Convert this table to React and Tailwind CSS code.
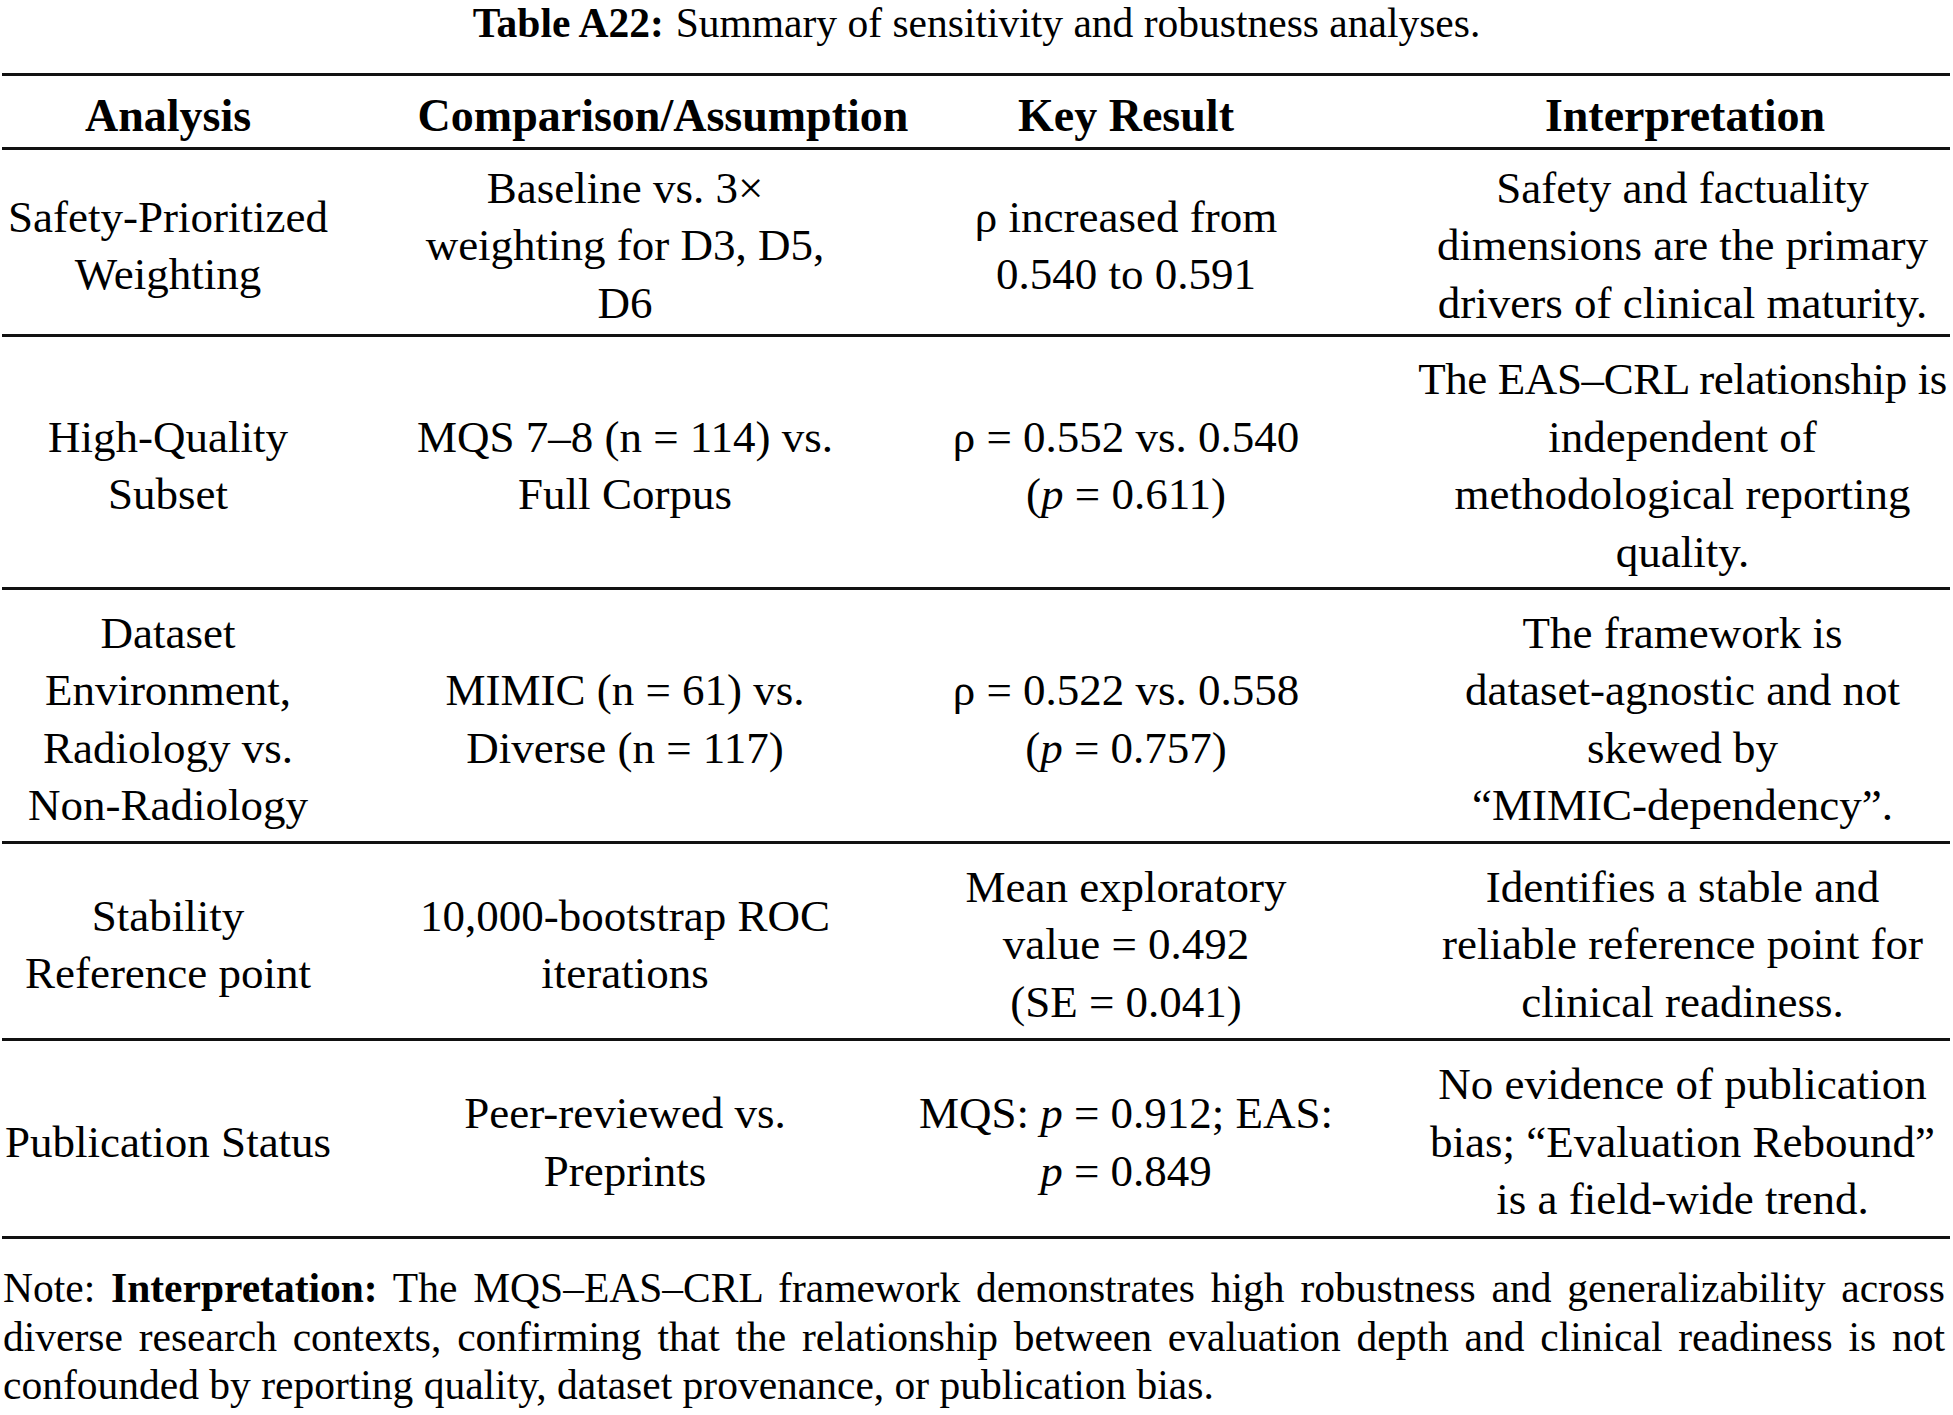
import React from "react";

const rows = [
  {
    h: "h-[184px]",
    c: [["Safety-Prioritized", "Weighting"], ["Baseline vs. 3×", "weighting for D3, D5,", "D6"], ["ρ increased from", "0.540 to 0.591"], ["Safety and factuality", "dimensions are the primary", "drivers of clinical maturity."]],
  },
  {
    h: "h-[250px]",
    c: [["High-Quality", "Subset"], ["MQS 7–8 (n = 114) vs.", "Full Corpus"], ["ρ = 0.552 vs. 0.540", <>(<i>p</i> = 0.611)</>], [<span className="tracking-[-0.4px]">The EAS–CRL relationship is</span>, "independent of", "methodological reporting", "quality."]],
  },
  {
    h: "h-[251px]",
    c: [["Dataset", "Environment,", "Radiology vs.", "Non-Radiology"], ["MIMIC (n = 61) vs.", "Diverse (n = 117)"], ["ρ = 0.522 vs. 0.558", <>(<i>p</i> = 0.757)</>], ["The framework is", "dataset-agnostic and not", "skewed by", "“MIMIC-dependency”."]],
  },
  {
    h: "h-[194px]",
    c: [["Stability", "Reference point"], ["10,000-bootstrap ROC", "iterations"], ["Mean exploratory", "value = 0.492", "(SE = 0.041)"], ["Identifies a stable and", "reliable reference point for", "clinical readiness."]],
  },
  {
    h: "h-[195px]",
    c: [["Publication Status"], ["Peer-reviewed vs.", "Preprints"], [<>MQS: <i>p</i> = 0.912; EAS:</>, <><i>p</i> = 0.849</>], ["No evidence of publication", "bias; “Evaluation Rebound”", "is a field-wide trend."]],
  },
];

function Rule() {
  return <div className="h-[3px] w-[1948px] ml-[2px] bg-[#111]" />;
}

function Cell({ lines, extra = "" }) {
  return (
    <div className={"flex flex-col items-center justify-center pt-[8px] " + extra}>
      {lines.map((l, i) => (
        <div key={i} className="whitespace-nowrap leading-[57.5px]">
          {l}
        </div>
      ))}
    </div>
  );
}

export default function App() {
  return (
    <div className="w-[1953px] h-[1415px] bg-white text-black overflow-hidden font-['Liberation_Serif',serif]">
      <div className="h-[46px] leading-[46px] text-[41.5px] text-center whitespace-nowrap">
        <b>Table A22:</b>
        <span className="ml-[12px]">Summary of sensitivity and robustness analyses.</span>
      </div>
      <div className="mt-[27px] text-[45px]">
        <Rule />
        <div className="grid grid-cols-[336px_578px_424px_615px] h-[71px] font-bold text-[46px]">
          <Cell lines={["Analysis"]} />
          <Cell lines={["Comparison/Assumption"]} extra="pl-[76px]" />
          <Cell lines={["Key Result"]} />
          <Cell lines={["Interpretation"]} extra="pl-[79px]" />
        </div>
        <Rule />
        {rows.map((r, i) => (
          <React.Fragment key={i}>
            <div className={"grid grid-cols-[336px_578px_424px_615px] " + r.h}>
              <Cell lines={r.c[0]} />
              <Cell lines={r.c[1]} />
              <Cell lines={r.c[2]} />
              <Cell lines={r.c[3]} extra="pl-[74px]" />
            </div>
            <Rule />
          </React.Fragment>
        ))}
      </div>
      <div className="mt-[25px] ml-[3px] w-[1942px] text-[41.5px] leading-[48.5px]">
        <div className="text-justify [text-align-last:justify]">
          Note: <b>Interpretation:</b> The MQS–EAS–CRL framework demonstrates high robustness and generalizability across
        </div>
        <div className="text-justify [text-align-last:justify]">
          diverse research contexts, confirming that the relationship between evaluation depth and clinical readiness is not
        </div>
        <div className="text-left">
          confounded by reporting quality, dataset provenance, or publication bias.
        </div>
      </div>
    </div>
  );
}
